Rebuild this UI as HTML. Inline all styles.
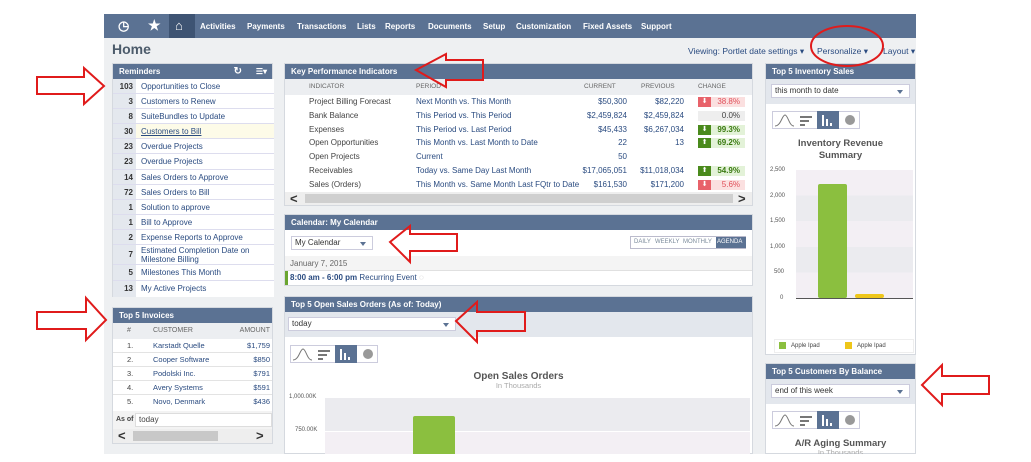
<!DOCTYPE html>
<html><head><meta charset="utf-8"><style>
*{margin:0;padding:0;box-sizing:border-box}
body{width:1031px;height:462px;background:#fff;font-family:"Liberation Sans",sans-serif;font-size:8px;color:#444;position:relative;overflow:hidden}
.a{position:absolute}
.bg{left:104px;top:14px;width:812px;height:440px;background:#eef0f2}
.nav{left:104px;top:14px;width:812px;height:24px;background:#5b7293;color:#fff;font-weight:bold;font-size:8px}
.nav span{position:absolute;top:8px}
.hd{background:#5b7293;color:#fff;font-weight:bold;font-size:8px;height:15px;line-height:15px;padding-left:6px}
.lnk{color:#2a4b80}
.rem div.r{position:absolute;left:0;width:161px;border-bottom:1px solid #dde;background:#fff}
.rem .n{position:absolute;left:0;top:0;bottom:0;width:23px;background:#e4e8ee;text-align:right;padding-right:3px;font-weight:bold;color:#333}
.rem .t{position:absolute;left:28px;color:#2a4b80}
.sel{background:#fff;border:1px solid #ccd;height:14px;line-height:12px;padding-left:3px;font-size:8px;color:#333}
.sel:after{content:"";position:absolute;right:6px;top:5px;border:3px solid transparent;border-top:4px solid #5b7293}
.ic{position:absolute;height:18px;border:1px solid #ccd;background:#fff}
.chev{position:absolute;font-size:13px;font-weight:bold;color:#333;line-height:13px}
</style></head><body>
<div class="a bg"></div>
<div class="a nav">
<span style="left:14px;top:4px;font-size:13px">&#x25F7;</span>
<span style="left:44px;top:3px;font-size:14px">★</span>
<div class="a" style="left:65px;top:0;width:26px;height:24px;background:#3e5473"></div>
<span style="left:71px;top:4px;font-size:13px">⌂</span>
<span style="left:96px">Activities</span><span style="left:143px">Payments</span><span style="left:193px">Transactions</span><span style="left:253px">Lists</span><span style="left:281px">Reports</span><span style="left:324px">Documents</span><span style="left:379px">Setup</span><span style="left:412px">Customization</span><span style="left:479px">Fixed Assets</span><span style="left:537px">Support</span>
</div>
<div class="a" style="left:112px;top:41px;font-size:14px;font-weight:bold;color:#4c5b6b">Home</div>
<div class="a lnk" style="left:688px;top:46px;font-size:8.5px">Viewing: Portlet date settings ▾</div>
<div class="a lnk" style="left:817px;top:46px;font-size:8.5px">Personalize ▾</div>
<div class="a lnk" style="left:883px;top:46px;font-size:8.5px">Layout ▾</div>

<!-- Reminders -->
<div class="a" style="left:112px;top:63px;width:161px;height:234px;background:#fff;border:1px solid #d5d9df">
<div class="hd">Reminders<span style="position:absolute;right:30px;font-size:10px">↻</span><span style="position:absolute;right:5px">☰▾</span></div>
<div class="rem a" style="left:0;top:15px;width:161px">
<div class="r" style="top:0;height:15px"><span class="n" style="line-height:15px">103</span><span class="t" style="line-height:15px">Opportunities to Close</span></div>
<div class="r" style="top:15px;height:15px"><span class="n" style="line-height:15px">3</span><span class="t" style="line-height:15px">Customers to Renew</span></div>
<div class="r" style="top:30px;height:15px"><span class="n" style="line-height:15px">8</span><span class="t" style="line-height:15px">SuiteBundles to Update</span></div>
<div class="r" style="top:45px;height:15px;background:#fdfbe8"><span class="n" style="line-height:15px">30</span><span class="t" style="line-height:15px;text-decoration:underline">Customers to Bill</span></div>
<div class="r" style="top:60px;height:15px"><span class="n" style="line-height:15px">23</span><span class="t" style="line-height:15px">Overdue Projects</span></div>
<div class="r" style="top:75px;height:16px"><span class="n" style="line-height:16px">23</span><span class="t" style="line-height:16px">Overdue Projects</span></div>
<div class="r" style="top:91px;height:15px"><span class="n" style="line-height:15px">14</span><span class="t" style="line-height:15px">Sales Orders to Approve</span></div>
<div class="r" style="top:106px;height:15px"><span class="n" style="line-height:15px">72</span><span class="t" style="line-height:15px">Sales Orders to Bill</span></div>
<div class="r" style="top:121px;height:15px"><span class="n" style="line-height:15px">1</span><span class="t" style="line-height:15px">Solution to approve</span></div>
<div class="r" style="top:136px;height:15px"><span class="n" style="line-height:15px">1</span><span class="t" style="line-height:15px">Bill to Approve</span></div>
<div class="r" style="top:151px;height:15px"><span class="n" style="line-height:15px">2</span><span class="t" style="line-height:15px">Expense Reports to Approve</span></div>
<div class="r" style="top:166px;height:20px"><span class="n" style="line-height:20px">7</span><span class="t" style="line-height:9px;top:1px">Estimated Completion Date on<br>Milestone Billing</span></div>
<div class="r" style="top:186px;height:16px"><span class="n" style="line-height:16px">5</span><span class="t" style="line-height:16px">Milestones This Month</span></div>
<div class="r" style="top:202px;height:16px;border:none"><span class="n" style="line-height:16px">13</span><span class="t" style="line-height:16px">My Active Projects</span></div>
</div></div>

<!-- Top 5 invoices -->
<div class="a" style="left:112px;top:307px;width:161px;height:137px;background:#fff;border:1px solid #d5d9df">
<div class="hd">Top 5 Invoices</div>
<div class="a" style="left:0;top:15px;width:159px;height:16px;background:#eceef1;color:#666;font-size:7px;line-height:16px"><span class="a" style="left:14px">#</span><span class="a" style="left:40px">CUSTOMER</span><span class="a" style="right:2px">AMOUNT</span></div>
<div class="a" style="left:0;top:31px;width:159px;font-size:7.5px">
<div style="height:14px;line-height:14px;border-bottom:1px solid #e3e3e3;position:relative"><span class="a" style="left:14px">1.</span><span class="a lnk" style="left:40px">Karstadt Quelle</span><span class="a lnk" style="right:2px">$1,759</span></div>
<div style="height:14px;line-height:14px;border-bottom:1px solid #e3e3e3;position:relative"><span class="a" style="left:14px">2.</span><span class="a lnk" style="left:40px">Cooper Software</span><span class="a lnk" style="right:2px">$850</span></div>
<div style="height:14px;line-height:14px;border-bottom:1px solid #e3e3e3;position:relative"><span class="a" style="left:14px">3.</span><span class="a lnk" style="left:40px">Podolski Inc.</span><span class="a lnk" style="right:2px">$791</span></div>
<div style="height:14px;line-height:14px;border-bottom:1px solid #e3e3e3;position:relative"><span class="a" style="left:14px">4.</span><span class="a lnk" style="left:40px">Avery Systems</span><span class="a lnk" style="right:2px">$591</span></div>
<div style="height:14px;line-height:14px;position:relative"><span class="a" style="left:14px">5.</span><span class="a lnk" style="left:40px">Novo, Denmark</span><span class="a lnk" style="right:2px">$436</span></div>
</div>
<div class="a" style="left:0;top:103px;width:159px;height:18px;background:#f3f3f3"><span class="a" style="left:3px;top:5px;font-weight:bold;font-size:7px">As of</span><div class="a" style="left:22px;top:2px;width:137px;height:14px;background:#fff;border:1px solid #ddd;padding-left:3px;line-height:12px">today</div></div>
<div class="a" style="left:0;top:121px;width:159px;height:14px;background:#eee"><div class="a" style="left:20px;top:2px;width:85px;height:10px;background:#c8c8c8"></div><span class="chev" style="left:5px;top:0">&lt;</span><span class="chev" style="left:143px;top:0">&gt;</span></div>
</div>

<!-- KPI -->
<div class="a" style="left:284px;top:63px;width:469px;height:143px;background:#fff;border:1px solid #d5d9df">
<div class="hd">Key Performance Indicators</div>
<div class="a" style="left:0;top:15px;width:467px;height:16px;background:#eceef1;color:#666;font-size:6.5px;line-height:16px"><span class="a" style="left:24px">INDICATOR</span><span class="a" style="left:131px">PERIOD</span><span class="a" style="left:299px">CURRENT</span><span class="a" style="left:356px">PREVIOUS</span><span class="a" style="left:413px">CHANGE</span></div>
<div class="a" style="left:0;top:31px;width:467px;font-size:8px">
<div style="position:relative;height:13.8px;line-height:13.8px"><span class="a" style="left:24px">Project Billing Forecast</span><span class="a lnk" style="left:131px">Next Month vs. This Month</span><span class="a lnk" style="right:125px">$50,300</span><span class="a lnk" style="right:68px">$82,220</span><span class="a" style="left:413px;top:2px;width:47px;height:10px;background:#fbe0e0"></span><span class="a" style="left:413px;top:2px;width:13px;height:10px;background:#e8626a;color:#fff;line-height:10px;text-align:center;font-size:7px">⬇</span><span class="a" style="right:12px;color:#e0505a">38.8%</span></div>
<div style="position:relative;height:13.8px;line-height:13.8px"><span class="a" style="left:24px">Bank Balance</span><span class="a lnk" style="left:131px">This Period vs. This Period</span><span class="a lnk" style="right:125px">$2,459,824</span><span class="a lnk" style="right:68px">$2,459,824</span><span class="a" style="left:413px;top:2px;width:47px;height:10px;background:#eee"></span><span class="a" style="right:12px">0.0%</span></div>
<div style="position:relative;height:13.8px;line-height:13.8px"><span class="a" style="left:24px">Expenses</span><span class="a lnk" style="left:131px">This Period vs. Last Period</span><span class="a lnk" style="right:125px">$45,433</span><span class="a lnk" style="right:68px">$6,267,034</span><span class="a" style="left:413px;top:2px;width:47px;height:10px;background:#e3f2d8"></span><span class="a" style="left:413px;top:2px;width:13px;height:10px;background:#4a8a1c;color:#fff;line-height:10px;text-align:center;font-size:7px">⬇</span><span class="a" style="right:12px;color:#3a7a10;font-weight:bold">99.3%</span></div>
<div style="position:relative;height:13.8px;line-height:13.8px"><span class="a" style="left:24px">Open Opportunities</span><span class="a lnk" style="left:131px">This Month vs. Last Month to Date</span><span class="a lnk" style="right:125px">22</span><span class="a lnk" style="right:68px">13</span><span class="a" style="left:413px;top:2px;width:47px;height:10px;background:#e3f2d8"></span><span class="a" style="left:413px;top:2px;width:13px;height:10px;background:#4a8a1c;color:#fff;line-height:10px;text-align:center;font-size:7px">⬆</span><span class="a" style="right:12px;color:#3a7a10;font-weight:bold">69.2%</span></div>
<div style="position:relative;height:13.8px;line-height:13.8px"><span class="a" style="left:24px">Open Projects</span><span class="a lnk" style="left:131px">Current</span><span class="a lnk" style="right:125px">50</span></div>
<div style="position:relative;height:13.8px;line-height:13.8px"><span class="a" style="left:24px">Receivables</span><span class="a lnk" style="left:131px">Today vs. Same Day Last Month</span><span class="a lnk" style="right:125px">$17,065,051</span><span class="a lnk" style="right:68px">$11,018,034</span><span class="a" style="left:413px;top:2px;width:47px;height:10px;background:#e3f2d8"></span><span class="a" style="left:413px;top:2px;width:13px;height:10px;background:#4a8a1c;color:#fff;line-height:10px;text-align:center;font-size:7px">⬆</span><span class="a" style="right:12px;color:#3a7a10;font-weight:bold">54.9%</span></div>
<div style="position:relative;height:13.8px;line-height:13.8px"><span class="a" style="left:24px">Sales (Orders)</span><span class="a lnk" style="left:131px">This Month vs. Same Month Last FQtr to Date</span><span class="a lnk" style="right:125px">$161,530</span><span class="a lnk" style="right:68px">$171,200</span><span class="a" style="left:413px;top:2px;width:47px;height:10px;background:#fbe0e0"></span><span class="a" style="left:413px;top:2px;width:13px;height:10px;background:#e8626a;color:#fff;line-height:10px;text-align:center;font-size:7px">⬇</span><span class="a" style="right:12px;color:#e0505a">5.6%</span></div>
</div>
<div class="a" style="left:0;top:128px;width:467px;height:13px;background:#eee"><div class="a" style="left:20px;top:2px;width:428px;height:9px;background:#cfcfcf"></div><span class="chev" style="left:5px;top:0">&lt;</span><span class="chev" style="left:453px;top:0">&gt;</span></div>
</div>

<!-- Calendar -->
<div class="a" style="left:284px;top:214px;width:469px;height:72px;background:#fff;border:1px solid #d5d9df">
<div class="hd">Calendar: My Calendar</div>
<div class="a sel" style="left:6px;top:21px;width:82px">My Calendar</div>
<div class="a" style="left:345px;top:21px;width:116px;height:13px;border:1px solid #bbc;font-size:6px;line-height:11px;color:#7a8a9a"><span class="a" style="left:3px">DAILY</span><span class="a" style="left:24px">WEEKLY</span><span class="a" style="left:52px">MONTHLY</span><span class="a" style="left:85px;width:30px;height:11px;background:#5b7293;color:#fff;padding-left:1px">AGENDA</span></div>
<div class="a" style="left:0;top:41px;width:467px;height:15px;background:#f4f4f4;border-bottom:1px solid #e0e0e0;line-height:15px;padding-left:5px;color:#666">January 7, 2015</div>
<div class="a" style="left:0;top:56px;width:3px;height:14px;background:#6aa530"></div>
<div class="a" style="left:5px;top:56px;line-height:14px"><b class="lnk">8:00 am - 6:00 pm</b> <span class="lnk">Recurring Event</span> <span style="color:#aaa">◌</span></div>
</div>

<!-- Open Sales Orders -->
<div class="a" style="left:284px;top:296px;width:469px;height:158px;background:#fff;border:1px solid #d5d9df">
<div class="hd">Top 5 Open Sales Orders (As of: Today)</div>
<div class="a" style="left:0;top:15px;width:467px;height:25px;background:#e3e7ed"></div>
<div class="a sel" style="left:3px;top:20px;width:168px">today</div>
<div class="ic" style="left:5px;top:48px;width:88px"><div class="a" style="left:44px;top:-1px;width:22px;height:18px;background:#5b7293"></div>
<svg class="a" style="left:0;top:0" width="88" height="16"><path d="M2 14 C8 14 9 3 12 3 C15 3 16 14 21 14" stroke="#777" fill="none"/><g fill="#777"><rect x="27" y="4" width="12" height="2"/><rect x="27" y="8" width="9" height="2"/><rect x="27" y="12" width="5" height="2"/></g><g fill="#fff"><rect x="49" y="3" width="2" height="11"/><rect x="53" y="7" width="2" height="7"/><rect x="57" y="11" width="2" height="3"/></g><circle cx="77" cy="8" r="5" fill="#999"/></svg></div>
<div class="a" style="left:0;top:74px;width:467px;text-align:center;font-weight:bold;font-size:10px;color:#555">Open Sales Orders</div>
<div class="a" style="left:0;top:84px;width:467px;text-align:center;font-size:7.5px;color:#aaa">In Thousands</div>
<div class="a" style="left:4px;top:97px;font-size:6px;color:#555">1,000.00K</div>
<div class="a" style="left:10px;top:130px;font-size:6px;color:#555">750.00K</div>
<div class="a" style="left:40px;top:101px;width:425px;height:33px;background:#ebebef"></div>
<div class="a" style="left:40px;top:134px;width:425px;height:24px;background:#f3eff4;border-top:1px solid #fff"></div>
<div class="a" style="left:128px;top:119px;width:42px;height:40px;background:#8bbf3f;border-radius:2px"></div>
</div>

<!-- Right column -->
<div class="a" style="left:765px;top:63px;width:151px;height:292px;background:#fff;border:1px solid #d5d9df">
<div class="hd">Top 5 Inventory Sales</div>
<div class="a" style="left:0;top:15px;width:149px;height:25px;background:#e3e7ed"></div>
<div class="a sel" style="left:5px;top:20px;width:139px">this month to date</div>
<div class="ic" style="left:6px;top:47px;width:88px"><div class="a" style="left:44px;top:-1px;width:22px;height:18px;background:#5b7293"></div>
<svg class="a" style="left:0;top:0" width="88" height="16"><path d="M2 14 C8 14 9 3 12 3 C15 3 16 14 21 14" stroke="#777" fill="none"/><g fill="#777"><rect x="27" y="4" width="12" height="2"/><rect x="27" y="8" width="9" height="2"/><rect x="27" y="12" width="5" height="2"/></g><g fill="#fff"><rect x="49" y="3" width="2" height="11"/><rect x="53" y="7" width="2" height="7"/><rect x="57" y="11" width="2" height="3"/></g><circle cx="77" cy="8" r="5" fill="#999"/></svg></div>
<div class="a" style="left:0;top:74px;width:149px;text-align:center;font-weight:bold;font-size:9.5px;color:#555;line-height:12px">Inventory Revenue<br>Summary</div>
<div class="a" style="left:4px;top:103px;font-size:6px;color:#555">2,500</div>
<div class="a" style="left:4px;top:129px;font-size:6px;color:#555">2,000</div>
<div class="a" style="left:4px;top:154px;font-size:6px;color:#555">1,500</div>
<div class="a" style="left:4px;top:180px;font-size:6px;color:#555">1,000</div>
<div class="a" style="left:8px;top:205px;font-size:6px;color:#555">500</div>
<div class="a" style="left:14px;top:231px;font-size:6px;color:#555">0</div>
<div class="a" style="left:30px;top:106px;width:117px;height:129px;background:repeating-linear-gradient(#f3eff4 0 25.6px,#ebebef 25.6px 51.2px)"></div>
<div class="a" style="left:30px;top:234px;width:117px;height:1px;background:#555"></div>
<div class="a" style="left:52px;top:120px;width:29px;height:114px;background:#8bbf3f;border-radius:2px"></div>
<div class="a" style="left:89px;top:230px;width:29px;height:4px;background:#eec61a;border-radius:2px"></div>
<div class="a" style="left:8px;top:275px;width:140px;height:14px;border:1px solid #eee;font-size:6px;line-height:12px"><span class="a" style="left:4px;top:2px;width:7px;height:7px;background:#8bbf3f"></span><span class="a" style="left:16px">Apple Ipad</span><span class="a" style="left:70px;top:2px;width:7px;height:7px;background:#eec61a"></span><span class="a" style="left:82px">Apple Ipad</span></div>
</div>
<div class="a" style="left:765px;top:363px;width:151px;height:91px;background:#fff;border:1px solid #d5d9df">
<div class="hd">Top 5 Customers By Balance</div>
<div class="a" style="left:0;top:15px;width:149px;height:25px;background:#e3e7ed"></div>
<div class="a sel" style="left:5px;top:20px;width:139px">end of this week</div>
<div class="ic" style="left:6px;top:47px;width:88px"><div class="a" style="left:44px;top:-1px;width:22px;height:18px;background:#5b7293"></div>
<svg class="a" style="left:0;top:0" width="88" height="16"><path d="M2 14 C8 14 9 3 12 3 C15 3 16 14 21 14" stroke="#777" fill="none"/><g fill="#777"><rect x="27" y="4" width="12" height="2"/><rect x="27" y="8" width="9" height="2"/><rect x="27" y="12" width="5" height="2"/></g><g fill="#fff"><rect x="49" y="3" width="2" height="11"/><rect x="53" y="7" width="2" height="7"/><rect x="57" y="11" width="2" height="3"/></g><circle cx="77" cy="8" r="5" fill="#999"/></svg></div>
<div class="a" style="left:0;top:74px;width:149px;text-align:center;font-weight:bold;font-size:9.5px;color:#555">A/R Aging Summary</div>
<div class="a" style="left:0;top:84px;width:149px;text-align:center;font-size:7.5px;color:#aaa">In Thousands</div>
</div>
<div class="a" style="left:0;top:454px;width:1031px;height:8px;background:#fff"></div>

<!-- Annotations -->
<svg class="a" style="left:0;top:0" width="1031" height="462" fill="none" stroke="#e01b1b" stroke-width="2">
<polygon points="37,77 84,77 84,68 104,86 84,104 84,94 37,94"/>
<polygon points="37,312 86,312 86,298 106,320 86,340 86,329 37,329"/>
<polygon points="416,70 446,54 446,60 483,60 483,80 446,80 446,87"/>
<polygon points="390,242 410,226 410,234 457,234 457,251 410,251 410,262"/>
<polygon points="456,321 477,302 477,312 525,312 525,331 477,331 477,342"/>
<polygon points="922,385 942,365 942,376 989,376 989,394 942,394 942,405"/>
<ellipse cx="847" cy="46" rx="36" ry="20"/>
</svg>
</body></html>
